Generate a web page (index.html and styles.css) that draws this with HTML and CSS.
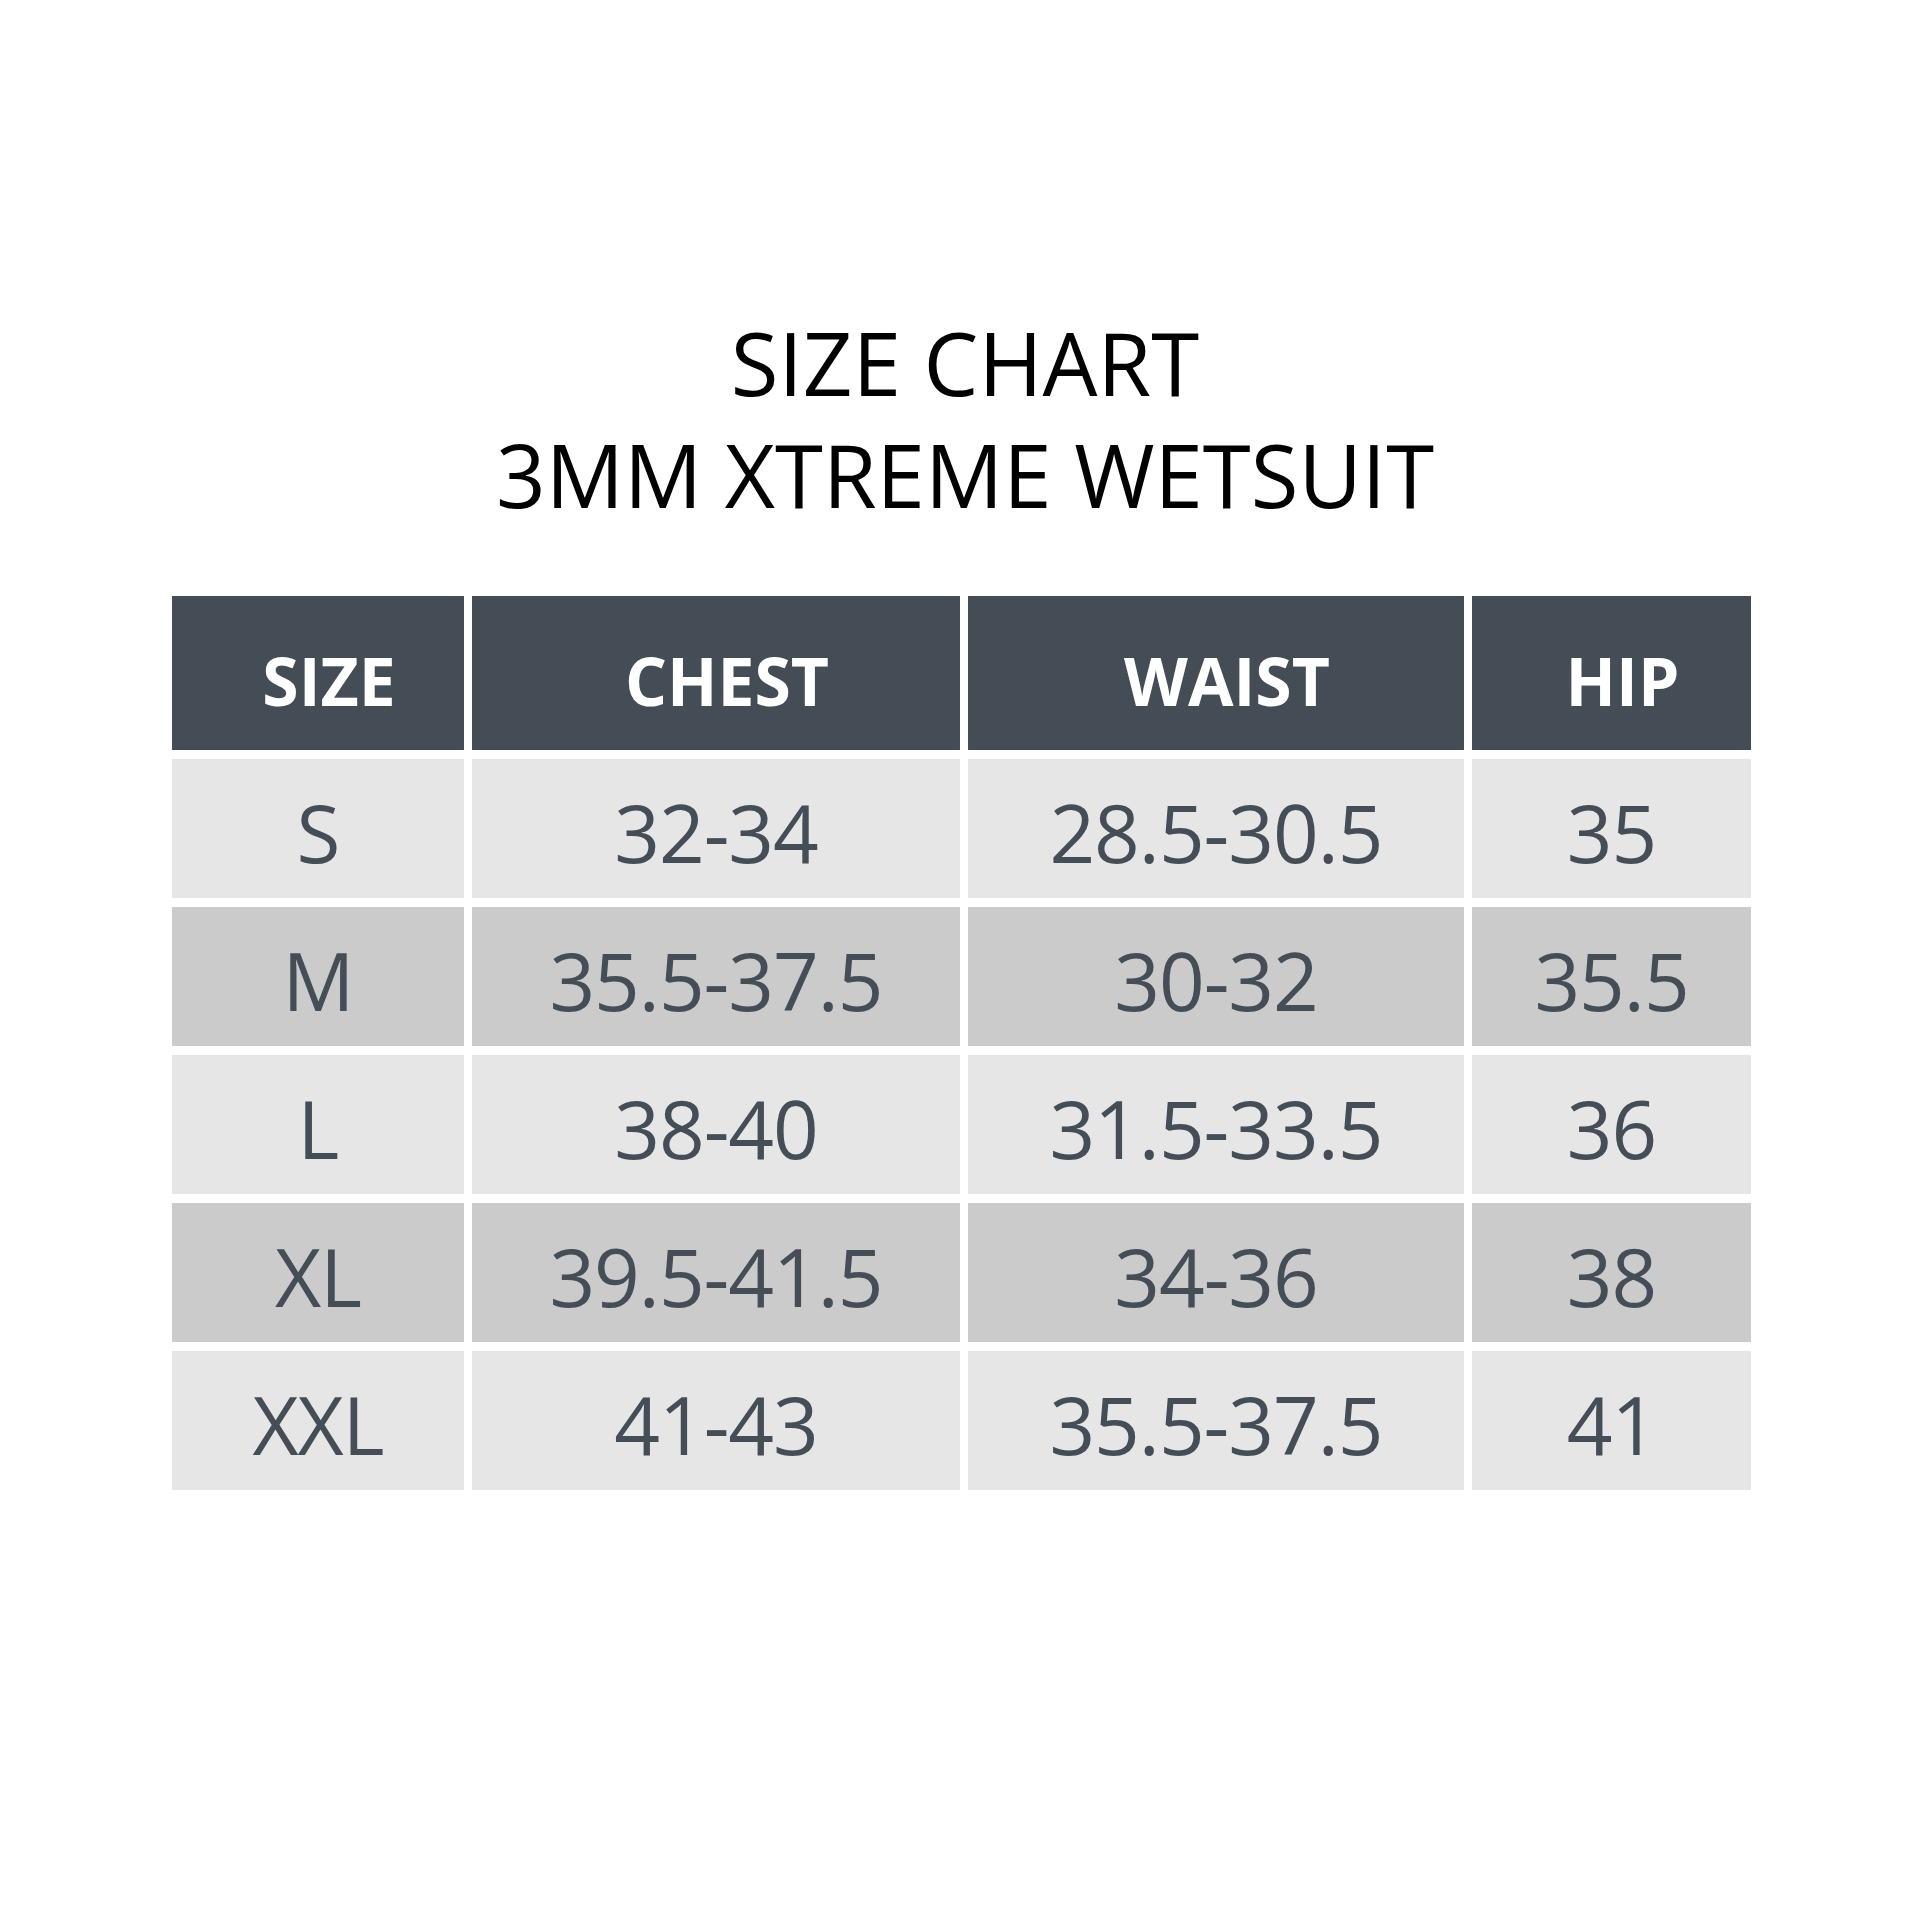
FILE: index.html
```html
<!DOCTYPE html>
<html lang="en">
<head>
<meta charset="utf-8">
<title>Size Chart - 3MM Xtreme Wetsuit</title>
<link rel="stylesheet" href="styles.css">
</head>
<body>
<main class="page">
  <h1 class="title">SIZE CHART<br>3MM XTREME WETSUIT</h1>
  <div class="chart">
    <div class="cell head">SIZE</div>
    <div class="cell head">CHEST</div>
    <div class="cell head">WAIST</div>
    <div class="cell head">HIP</div>

    <div class="cell light">S</div>
    <div class="cell light">32-34</div>
    <div class="cell light">28.5-30.5</div>
    <div class="cell light">35</div>

    <div class="cell dark">M</div>
    <div class="cell dark">35.5-37.5</div>
    <div class="cell dark">30-32</div>
    <div class="cell dark">35.5</div>

    <div class="cell light">L</div>
    <div class="cell light">38-40</div>
    <div class="cell light">31.5-33.5</div>
    <div class="cell light">36</div>

    <div class="cell dark">XL</div>
    <div class="cell dark">39.5-41.5</div>
    <div class="cell dark">34-36</div>
    <div class="cell dark">38</div>

    <div class="cell light">XXL</div>
    <div class="cell light">41-43</div>
    <div class="cell light">35.5-37.5</div>
    <div class="cell light">41</div>
  </div>
</main>
</body>
</html>
```

FILE: styles.css
```css
html, body {
  margin: 0;
  padding: 0;
  background: #ffffff;
}

.page {
  width: 1920px;
  height: 1920px;
  padding-top: 306px;
  box-sizing: border-box;
  font-family: "Open Sans", "Liberation Sans", sans-serif;
}

.title {
  margin: 0 0 66px 0;
  padding-left: 10px;
  font-size: 87px;
  font-weight: 400;
  line-height: 112px;
  color: #000000;
  text-align: center;
}

.chart {
  display: grid;
  grid-template-columns: 292px 488px 496px 279px;
  grid-template-rows: 154px repeat(5, 139px);
  column-gap: 8px;
  row-gap: 9px;
  margin-left: 172px;
  width: 1579px;
}

.cell {
  display: flex;
  align-items: center;
  justify-content: center;
  box-sizing: border-box;
}

.head {
  background: #444c56;
  color: #ffffff;
  font-size: 66px;
  font-weight: 700;
  padding-top: 13px;
  padding-left: 22px;
}

.light,
.dark {
  font-size: 80px;
  font-weight: 400;
  letter-spacing: -1px;
  color: #454d57;
  padding-top: 5px;
}

.light {
  background: #e6e6e6;
}

.dark {
  background: #cbcbcb;
}
```
